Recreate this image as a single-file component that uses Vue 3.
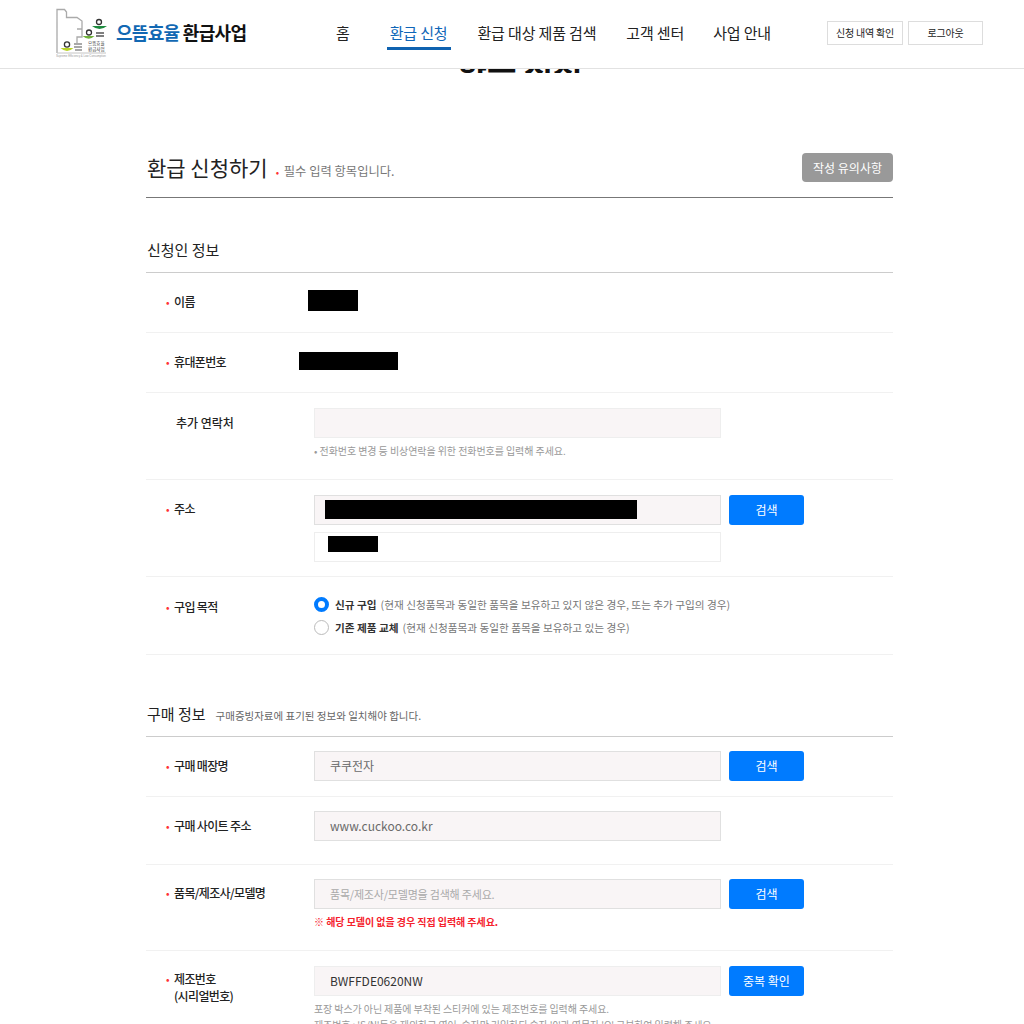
<script setup>
const nav = [
  { text: '홈' },
  { text: '환급 신청', active: true },
  { text: '환급 대상 제품 검색' },
  { text: '고객 센터' },
  { text: '사업 안내' },
]
</script>

<template>
  <div class="page">
    <header class="header">
      <div class="brand">
        <svg class="logo" width="54" height="50" viewBox="0 0 54 50" fill="none">
          <path d="M1 45V1.500H8.500L10.500 4V9.500H21L26 13V21H21M26 21V29H21V35" stroke="#aaa" stroke-width="1.300"/>
          <path d="M1 45H50" stroke="#c4c4c4" stroke-width="1"/>
          <circle cx="11" cy="36.500" r="2.600" stroke="#333" stroke-width="1.300"/>
          <path d="M4.500 40q6.500 6 13 0z" fill="#b9d32a"/>
          <path d="M18 36h8M18 39h8M19 42h7" stroke="#555" stroke-width="1.200"/>
          <circle cx="33" cy="24.500" r="2.500" stroke="#333" stroke-width="1.300"/>
          <path d="M26.500 28q6.500 5.500 12 0z" fill="#71b33c"/>
          <circle cx="43" cy="14" r="2.500" stroke="#333" stroke-width="1.300"/>
          <path d="M36 18q7.500 6 15 0z" fill="#1d8a3e"/>
          <path d="M40 25h8M40 28h8" stroke="#555" stroke-width="1.400"/>
          <text x="32" y="37" class="logo-t">으뜸효율</text>
          <text x="32" y="43" class="logo-t">환급사업</text>
          <text x="0" y="49" class="logo-s">Supreme Efficiency &amp; Low Consumption</text>
        </svg>
        <div class="brand-name"><span class="brand-blue">으뜸효율</span> 환급사업</div>
      </div>
      <nav class="nav">
        <a v-for="n in nav" :key="n.text" class="nav-item" :class="{ active: n.active }">{{ n.text }}</a>
      </nav>
      <div class="head-btns">
        <a class="head-btn first">신청 내역 확인</a>
        <a class="head-btn second">로그아웃</a>
      </div>
    </header>

    <div class="hero"><span class="hero-text">환급 신청</span></div>

    <main class="main">
      <div class="title-bar">
        <h1 class="title">환급 신청하기</h1>
        <span class="required"><i class="dot">•</i> 필수 입력 항목입니다.</span>
        <a class="notice-btn">작성 유의사항</a>
      </div>

      <h2 class="section first-section">신청인 정보</h2>

      <div class="row r-name">
        <div class="label"><i class="dot">•</i>이름</div>
        <div class="value"><div class="black black-name"></div></div>
      </div>
      <div class="row r-phone">
        <div class="label"><i class="dot">•</i>휴대폰번호</div>
        <div class="value"><div class="black black-phone"></div></div>
      </div>
      <div class="row r-extra">
        <div class="label plain">추가 연락처</div>
        <div class="value">
          <div class="line"><div class="input"></div></div>
          <p class="hint first-hint">• 전화번호 변경 등 비상연락을 위한 전화번호를 입력해 주세요.</p>
        </div>
      </div>
      <div class="row r-addr">
        <div class="label"><i class="dot">•</i>주소</div>
        <div class="value">
          <div class="line">
            <div class="input strong"><div class="black black-addr"></div></div>
            <a class="btn">검색</a>
          </div>
          <div class="line second-line">
            <div class="input white"><div class="black black-addr2"></div></div>
          </div>
        </div>
      </div>
      <div class="row r-purpose">
        <div class="label"><i class="dot">•</i>구입 목적</div>
        <div class="value radios">
          <div class="radio-line">
            <span class="radio on"></span>
            <b>신규 구입</b>
            <span class="radio-note">(현재 신청품목과 동일한 품목을 보유하고 있지 않은 경우, 또는 추가 구입의 경우)</span>
          </div>
          <div class="radio-line">
            <span class="radio"></span>
            <b>기존 제품 교체</b>
            <span class="radio-note">(현재 신청품목과 동일한 품목을 보유하고 있는 경우)</span>
          </div>
        </div>
      </div>

      <h2 class="section second-section">구매 정보<small>구매증빙자료에 표기된 정보와 일치해야 합니다.</small></h2>

      <div class="row r-store">
        <div class="label"><i class="dot">•</i>구매 매장명</div>
        <div class="value">
          <div class="line">
            <div class="input strong filled">쿠쿠전자</div>
            <a class="btn">검색</a>
          </div>
        </div>
      </div>
      <div class="row r-site">
        <div class="label"><i class="dot">•</i>구매 사이트 주소</div>
        <div class="value">
          <div class="line"><div class="input strong filled">www.cuckoo.co.kr</div></div>
        </div>
      </div>
      <div class="row r-model">
        <div class="label"><i class="dot">•</i>품목/제조사/모델명</div>
        <div class="value">
          <div class="line">
            <div class="input strong placeholder">품목/제조사/모델명을 검색해 주세요.</div>
            <a class="btn">검색</a>
          </div>
          <p class="warn">※ 해당 모델이 없을 경우 직접 입력해 주세요.</p>
        </div>
      </div>
      <div class="row r-serial">
        <div class="label serial"><i class="dot">•</i><span>제조번호<br>(시리얼번호)</span></div>
        <div class="value">
          <div class="line">
            <div class="input dark">BWFFDE0620NW</div>
            <a class="btn">중복 확인</a>
          </div>
          <p class="hint serial-hint">포장 박스가 아닌 제품에 부착된 스티커에 있는 제조번호를 입력해 주세요.<br>제조번호 : 'S/N'등을 제외하고 영어, 숫자만 기입하되 숫자 '0'과 영문자 'O' 구분하여 입력해 주세요.</p>
        </div>
      </div>
    </main>
  </div>
</template>

<style>
html, body { margin: 0; background: #fff; }
</style>

<style scoped>
.page {
  width: 1024px;
  height: 1024px;
  overflow: hidden;
  background: #fff;
  color: #222;
  font-family: "Noto Sans CJK KR", "Noto Sans", sans-serif;
}
.header {
  height: 68px;
  border-bottom: 1px solid #e2e2e2;
  display: flex;
  box-sizing: content-box;
}
.brand {
  width: 336px;
  flex: none;
  display: flex;
  align-items: flex-start;
  padding: 8px 0 0 56px;
  box-sizing: border-box;
}
.logo { flex: none; }
.logo-t { font-size: 4.500px; fill: #333; }
.logo-s { font-size: 2.800px; fill: #999; font-family: "Liberation Sans", sans-serif; }
.brand-name {
  margin: 11px 0 0 6px;
  font-size: 18px;
  line-height: 27px;
  font-weight: 700;
  color: #111;
  letter-spacing: -0.7px;
  white-space: nowrap;
}
.brand-blue { color: #1268b3; }
.nav {
  display: flex;
  width: 452px;
  flex: none;
  height: 50px;
}
.nav-item {
  font-size: 15px;
  line-height: 22px;
  padding-top: 22px;
  color: #222;
  letter-spacing: -0.15px;
  white-space: nowrap;
  height: 25px;
  margin-right: 30px;
}
.nav-item:first-child { margin-right: 40px; }
.nav-item:nth-child(4) { margin-right: 29px; }
.nav-item.active {
  color: #0f66b8;
  border-bottom: 3px solid #0f62b0;
  padding-left: 3px;
  padding-right: 4px;
  margin-left: -3px;
  margin-right: 26px;
}
.head-btns {
  display: flex;
  gap: 5px;
  padding-top: 21px;
  margin-left: 39px;
}
.head-btn {
  height: 24px;
  border: 1px solid #ddd;
  font-size: 10px;
  line-height: 22px;
  text-align: center;
  box-sizing: border-box;
  color: #222;
  letter-spacing: -0.2px;
}
.head-btn.first { width: 76px; }
.head-btn.second { width: 75px; }
.hero {
  height: 4px;
  overflow: hidden;
  display: flex;
  justify-content: center;
  align-items: flex-end;
}
.hero-text {
  font-size: 32px;
  line-height: 36px;
  font-weight: 700;
  color: #111;
  white-space: nowrap;
  margin-bottom: -15px;
  margin-left: 16px;
}
.main {
  width: 747px;
  margin-left: 146px;
}
.title-bar {
  margin-top: 76px;
  height: 48px;
  border-bottom: 1px solid #777;
  display: flex;
  align-items: flex-start;
  box-sizing: content-box;
}
.title {
  margin: 2px 0 0 1px;
  font-size: 21px;
  line-height: 32px;
  font-weight: 400;
  color: #222;
  white-space: nowrap;
}
.required {
  margin: 12px 0 0 8px;
  font-size: 12.300px;
  line-height: 20px;
  color: #777;
  flex: 1;
  white-space: nowrap;
}
.required .dot { margin-right: 2px; }
.dot {
  font-style: normal;
  color: #f33;
  font-size: 10px;
}
.notice-btn {
  width: 91px;
  height: 29px;
  margin-top: 4px;
  border-radius: 4px;
  background: #999;
  color: #fff;
  font-size: 12px;
  line-height: 29px;
  text-align: center;
}
.section {
  margin: 0;
  padding-left: 1px;
  font-size: 15px;
  font-weight: 400;
  color: #222;
  border-bottom: 1px solid #ccc;
  white-space: nowrap;
}
.first-section {
  margin-top: 41px;
  height: 33px;
  line-height: 21px;
}
.second-section {
  margin-top: 48px;
  height: 33px;
  line-height: 21px;
}
.section small {
  font-size: 10.500px;
  color: #666;
  margin-left: 10px;
}
.row {
  display: grid;
  grid-template-columns: 168px 1fr;
  border-bottom: 1px solid #f1f1f1;
  box-sizing: border-box;
}
.r-name { height: 60px; }
.r-phone { height: 60px; }
.r-extra { height: 87px; padding-top: 15px; }
.r-addr { height: 97px; padding-top: 15px; }
.r-purpose { height: 78px; padding-top: 15px; }
.r-store { height: 60px; padding-top: 14px; }
.r-site { height: 68px; padding-top: 14px; }
.r-model { height: 86px; padding-top: 14px; }
.r-serial { padding-top: 15px; }

.label {
  padding-left: 20px;
  font-size: 12px;
  line-height: 18px;
  font-weight: 500;
  color: #222;
  letter-spacing: -0.65px;
  white-space: nowrap;
  display: flex;
  gap: 5px;
}
.label .dot { width: 3px; }
.label.plain { padding-left: 30px; padding-top: 6px; letter-spacing: 0; }
.r-name .label { padding-top: 20px; }
.r-phone .label { padding-top: 20px; }
.r-addr .label { padding-top: 5px; }
.r-purpose .label { padding-top: 6px; }
.r-store .label { padding-top: 6px; }
.r-site .label { padding-top: 6px; }
.r-model .label { padding-top: 5px; }
.label.serial { padding-top: 4px; line-height: 17px; }

.line { display: flex; gap: 8px; }
.second-line { margin-top: 7px; }
.input {
  width: 407px;
  height: 30px;
  box-sizing: border-box;
  background: #f9f5f6;
  border: 1px solid #eee;
  padding-left: 15px;
  font-size: 12px;
  line-height: 28px;
  color: #666;
}
.input.strong { border-color: #e0e0e0; }
.input.white { background: #fff; }
.input.filled { color: #6b6b6b; }
.input.placeholder { color: #aaa; font-size: 11px; letter-spacing: -0.2px; }
.input.dark { color: #333; }
.btn {
  width: 75px;
  height: 30px;
  border-radius: 3px;
  background: #007bff;
  color: #fff;
  font-size: 12px;
  line-height: 30px;
  text-align: center;
}
.black { background: #000; }
.black-name { width: 50px; height: 21px; margin: 17px 0 0 -6px; }
.black-phone { width: 99px; height: 18px; margin: 19px 0 0 -15px; }
.black-addr { width: 312px; height: 19px; margin: 4px 0 0 -5px; }
.black-addr2 { width: 50px; height: 16px; margin: 3px 0 0 -2px; }

.hint {
  margin: 0;
  font-size: 10px;
  line-height: 16px;
  color: #999;
  letter-spacing: -0.07px;
  white-space: nowrap;
}
.first-hint { margin-top: 5px; }
.warn {
  margin: 5px 0 0;
  font-size: 10px;
  line-height: 16px;
  font-weight: 700;
  color: #f5222d;
  letter-spacing: -0.06px;
}
.serial-hint { margin-top: 5px; letter-spacing: -0.1px; }
.radios { display: flex; flex-direction: column; gap: 7px; padding-top: 4px; }
.radio-line {
  display: flex;
  align-items: center;
  height: 16px;
  font-size: 10.650px;
  white-space: nowrap;
}
.radio-line b { font-weight: 700; color: #333; margin-left: 6px; }
.radio-note { color: #777; margin-left: 4px; }
.radio {
  width: 15px;
  height: 15px;
  border-radius: 50%;
  border: 1px solid #bbb;
  box-sizing: border-box;
  background: #fff;
  flex: none;
}
.radio.on {
  border: 4.500px solid #007bff;
}
</style>
